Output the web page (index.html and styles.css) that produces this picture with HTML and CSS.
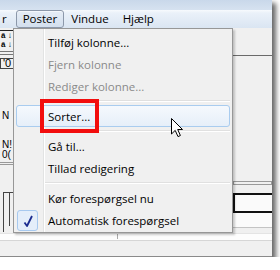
FILE: index.html
```html
<!DOCTYPE html>
<html lang="da">
<head>
    <meta charset="UTF-8">
    <title>Poster</title>
    <link rel="stylesheet" href="styles.css">
</head>
<body>
    <div class="screen">
        <div class="chrome"></div>

        <div class="menubar">
            <span class="mitem cut">r</span>
            <span class="mitem open">Poster</span>
            <span class="mitem">Vindue</span>
            <span class="mitem">Hjælp</span>
        </div>

        <div class="main">
            <!-- left document pane, mostly hidden behind the menu -->
            <div class="left">
                <div class="hdr">
                    <div>ā ↓</div>
                    <div>ā ↓</div>
                </div>
                <div class="dbl"></div>
                <div class="cell">'0</div>
                <div class="lbl first">N</div>
                <div class="lbl second">N!</div>
                <div class="lbl">0(</div>
                <div class="dbl low"></div>
                <div class="grid">
                    <div class="gcol"></div>
                </div>
            </div>

            <!-- right pane -->
            <div class="right">
                <div class="rtop"></div>
                <div class="rmid"></div>
                <div class="rbox"></div>
                <div class="rrow"></div>
            </div>
        </div>

        <div class="strip"><span class="tick"></span></div>
        <div class="status"></div>

        <!-- open Poster menu -->
        <div class="menu">
            <div class="item"><span class="ico"></span>Tilføj kolonne...</div>
            <div class="item off"><span class="ico"></span>Fjern kolonne</div>
            <div class="item off"><span class="ico"></span>Rediger kolonne...</div>
            <div class="sep"></div>
            <div class="item hot"><span class="ico"></span>Sorter...</div>
            <div class="sep"></div>
            <div class="item"><span class="ico"></span>Gå til...</div>
            <div class="item"><span class="ico"></span>Tillad redigering</div>
            <div class="sep"></div>
            <div class="item"><span class="ico"></span>Kør forespørgsel nu</div>
            <div class="item">
                <span class="ico checked">
                    <svg width="20" height="20" viewBox="0 0 20 20">
                        <path d="M6.5 11.5 L9 15 L14 5" fill="none" stroke="#1b2c8f" stroke-width="1.8" stroke-linejoin="round"/>
                    </svg>
                </span>Automatisk forespørgsel
            </div>
        </div>

        <!-- annotation and mouse pointer -->
        <div class="mark"></div>
        <svg class="pointer" width="14" height="21" viewBox="0 0 14 21">
            <path d="M0.5 0.5 L0.5 16 L4.2 12.4 L7 18.6 L9.4 17.5 L6.7 11.5 L11.5 11.5 Z" fill="#fff" stroke="#000" stroke-width="1" stroke-linejoin="round"/>
        </svg>
    </div>
</body>
</html>
```

FILE: styles.css
```css
* {
    box-sizing: border-box;
}

body {
    margin: 0;
    background: #fff;
    font-family: "Open Sans", "Noto Sans", sans-serif;
    font-size: 11.5px;
    color: #000;
}

.screen {
    position: relative;
    width: 272px;
    height: 257px;
    overflow: hidden;
    background: #f0f0f0;
    box-shadow: 3px 4px 5px 1px rgba(0, 0, 0, 0.6);
}

/* window frame + menu bar */
.chrome {
    height: 10px;
    background: linear-gradient(#c9d8ea, #d6e2f0);
}

.menubar {
    display: flex;
    height: 18px;
    background: linear-gradient(#f7fafd 0, #eaf1f9 3px, #dae5f2 100%);
}

.mitem {
    height: 18px;
    line-height: 16px;
    padding: 0 6px;
    border: 1px solid transparent;
    border-radius: 3px;
}

.mitem.cut {
    padding: 0 8px 0 1px;
}

.mitem.open {
    border-color: #8c98aa;
    background: linear-gradient(#e6edf6, #d3dfee);
    box-shadow: inset 0 1px 0 #f4f7fb;
}

/* content under the menu */
.main {
    display: flex;
    height: 205px;
}

.left {
    flex: 1;
    font-family: "Liberation Sans", sans-serif;
}

.hdr {
    margin-top: 2px;
    height: 19px;
    border-top: 1px solid #222;
    padding-left: 1px;
    font-size: 8px;
    font-weight: bold;
    line-height: 9px;
}

.dbl {
    height: 4px;
    margin-top: 2px;
    border-top: 1px solid #777;
    border-bottom: 1px solid #777;
}

.cell {
    margin-top: 3px;
    height: 11px;
    border: 1px solid #444;
    border-right: none;
    padding-left: 2px;
    font-size: 11px;
    line-height: 9px;
}

.lbl {
    padding-left: 2px;
    font-size: 10px;
    line-height: 10px;
}

.lbl.first {
    margin-top: 42px;
}

.lbl.second {
    margin-top: 19px;
}

.dbl.low {
    margin-top: 2px;
    height: 3px;
    border-color: #999;
}

.grid {
    margin: 27px 0 0 3px;
    height: 40px;
    border-left: 1px solid #444;
    border-top: 1px solid #444;
}

.gcol {
    margin-left: 5px;
    height: 33px;
    border-left: 1px solid #444;
}

.right {
    width: 40px;
    border-left: 1px solid #7a7a7a;
}

.rtop {
    height: 28px;
    border-bottom: 1px solid #6a6a6a;
}

.rmid {
    height: 126px;
    border-bottom: 1px solid #999;
    box-shadow: 0 3px 0 -1px #f0f0f0, 0 3px 0 0 #999;
}

.rbox {
    margin-top: 11px;
    height: 20px;
    border: 2px solid #111;
    border-right: none;
    background: #fafafa;
}

.rrow {
    height: 15px;
    border-bottom: 1px solid #c4c4c4;
    background: #fbfbfb;
}

.strip {
    height: 7px;
    background: #fdfdfd;
    border-top: 1px solid #e4e4e4;
}

.tick {
    display: block;
    margin-left: 117px;
    width: 1px;
    height: 5px;
    background: #aaa;
}

.status {
    height: 17px;
    border-top: 1px solid #d6d6d6;
    border-bottom: 1px solid #8a8a8a;
    background: #f0f0f0;
}

/* drop-down menu */
.menu {
    position: absolute;
    left: 13px;
    top: 28px;
    width: 220px;
    padding: 2px 2px 1px;
    border: 1px solid #979797;
    background: #f0f0f0 linear-gradient(to right, transparent 29px, #e2e3e3 29px, #e2e3e3 30px, #fff 30px, #fff 31px, transparent 31px);
    box-shadow: 2px 2px 2px rgba(0, 0, 0, 0.2);
}

.item {
    display: flex;
    align-items: center;
    height: 22px;
    border: 1px solid transparent;
    border-radius: 3px;
    white-space: nowrap;
}

.item.off {
    color: #8a8a8a;
}

.item.hot {
    border-color: #a9ccef;
    background: linear-gradient(#f5f9fd, #e6eff9);
}

.ico {
    width: 21px;
    height: 21px;
    margin-right: 10px;
}

.ico.checked {
    border: 1px solid #a7c9ef;
    border-radius: 3px;
    background: #e4eefa;
}

.sep {
    height: 8px;
    margin-left: 29px;
    background: linear-gradient(transparent 3px, #e0e0e0 3px, #e0e0e0 4px, #fff 4px, #fff 5px, transparent 5px);
}

.mark {
    position: absolute;
    left: 40px;
    top: 99px;
    width: 59px;
    height: 34px;
    border: 4px solid #f20d0d;
}

.pointer {
    position: absolute;
    left: 171px;
    top: 118px;
}
```
